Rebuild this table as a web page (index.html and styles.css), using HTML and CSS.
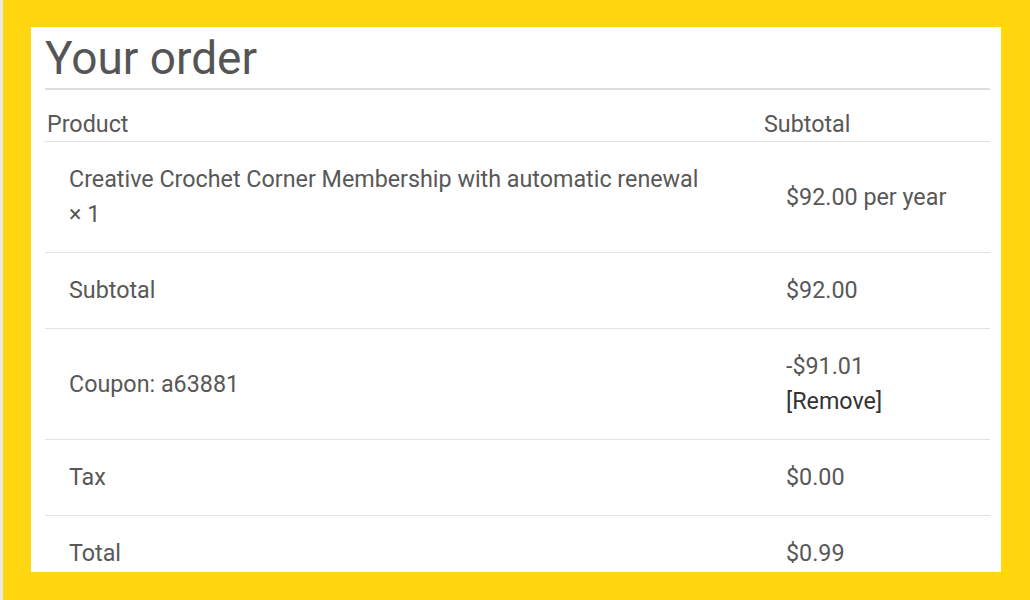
FILE: index.html
```html
<!DOCTYPE html>
<html>
<head>
<meta charset="utf-8">
<link rel="stylesheet" href="styles.css">
</head>
<body>
<div class="frame">
  <div class="panel">
    <h2 class="title">Your order</h2>
    <table class="order">
      <colgroup><col class="c1"><col class="c2"></colgroup>
      <thead>
        <tr><th>Product</th><th>Subtotal</th></tr>
      </thead>
      <tbody>
        <tr>
          <td>Creative Crochet Corner Membership with automatic renewal<br>× 1</td>
          <td class="mid">$92.00 per year</td>
        </tr>
        <tr><td>Subtotal</td><td>$92.00</td></tr>
        <tr><td class="mid">Coupon: a63881</td><td>-$91.01<br><a class="remove">[Remove]</a></td></tr>
        <tr><td>Tax</td><td>$0.00</td></tr>
        <tr><td>Total</td><td>$0.99</td></tr>
      </tbody>
    </table>
  </div>
</div>
</body>
</html>
```
FILE: styles.css
```css
html, body { margin: 0; padding: 0; }
body {
  background: #ffd60f;
  font-family: Roboto, "Liberation Sans", sans-serif;
  color: #585858;
  width: 1030px;
  height: 600px;
  overflow: hidden;
}
.frame {
  height: 600px;
  border-left: 3px solid #e9e9e6;
  padding: 27px 0 0 28px;
  box-sizing: border-box;
}
.panel {
  background: #fff;
  width: 970px;
  height: 545px;
  overflow: hidden;
  padding: 0 11px 0 14px;
  box-sizing: border-box;
}
.title {
  margin: 0;
  font-size: 46px;
  font-weight: 400;
  line-height: 54px;
  padding-top: 4px;
  padding-bottom: 3px;
  border-bottom: 2px solid #dcdcdc;
  color: #555;
}
.order {
  width: 100%;
  border-collapse: collapse;
  font-size: 23.3px;
}
.c1 { width: 717px; }
.order th {
  text-align: left;
  font-weight: 400;
  line-height: 34px;
  padding: 17px 2px 0;
  border-bottom: 1px solid #e2e2e2;
}
.order td {
  line-height: 35px;
  padding: 20px 24px;
  border-bottom: 1px solid #e2e2e2;
  vertical-align: top;
}
.order td.mid { vertical-align: middle; }
.remove { color: #333; }
```
